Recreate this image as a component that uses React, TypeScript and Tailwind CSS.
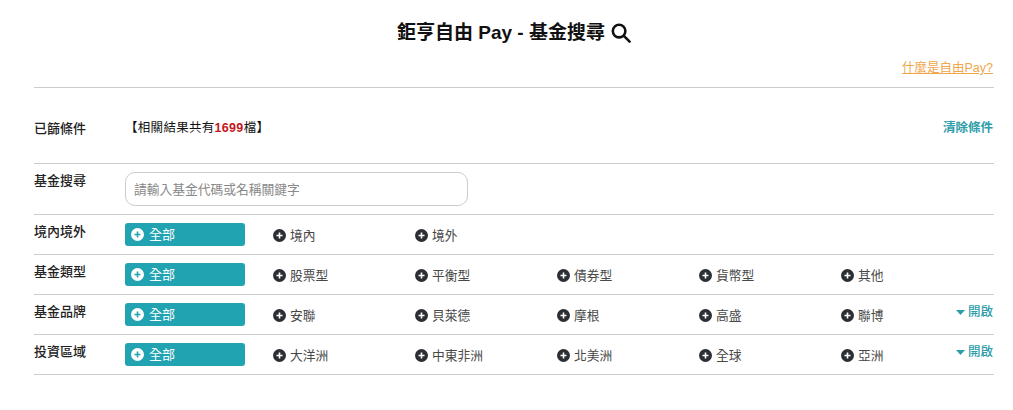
const font = { fontFamily: '"Liberation Sans", "Noto Sans CJK TC", sans-serif' }

const filterRows = [
  { label: '境內境外', options: ['境內', '境外'], more: false },
  { label: '基金類型', options: ['股票型', '平衡型', '債券型', '貨幣型', '其他'], more: false },
  { label: '基金品牌', options: ['安聯', '貝萊德', '摩根', '高盛', '聯博'], more: true },
  { label: '投資區域', options: ['大洋洲', '中東非洲', '北美洲', '全球', '亞洲'], more: true },
]

function PlusDot({ active }: { active?: boolean }) {
  const bg = active ? '#ffffff' : '#2b2e33'
  const fg = active ? '#21a3b1' : '#ffffff'
  return (
    <svg width="13" height="13" viewBox="0 0 13 13" className="shrink-0">
      <circle cx="6.5" cy="6.5" r="6.5" fill={bg} />
      <path d="M6.5 3.5v6M3.5 6.5h6" stroke={fg} strokeWidth="1.6" />
    </svg>
  )
}

export default function App() {
  return (
    <div className="h-[410px] w-[1013px] overflow-hidden bg-white" style={font}>
      <div className="ml-[34px] w-[960px]">
        {/* Title */}
        <div className="flex h-[59px] items-center justify-center gap-[6px] pt-[7px] text-[19px] font-bold text-[#111]">
          <span>鉅亨自由 Pay - 基金搜尋</span>
          <svg width="20" height="20" viewBox="0 0 21 21" fill="none" stroke="#111" strokeWidth="2.7">
            <circle cx="8.5" cy="8.5" r="6.6" />
            <path d="M13.5 13.5l6 6" strokeLinecap="round" />
          </svg>
        </div>

        <div className="flex h-[29px] items-start justify-end border-b border-[#ccc] pr-[1px]">
          <a className="text-[12.5px] leading-[18px] text-[#f0a64a] underline">什麼是自由Pay?</a>
        </div>

        {/* Result count */}
        <div className="flex h-[76px] items-center border-b border-[#ccc] pt-[6px]">
          <div className="w-[91px] shrink-0 text-[13px] font-medium text-[#222]">已篩條件</div>
          <div className="text-[12.5px] tracking-[0.3px] text-[#111]">
            【相關結果共有<span className="font-bold text-[#c4161c]">1699</span>檔】
          </div>
          <a className="ml-auto pr-[1px] text-[12.5px] font-bold text-[#2f9eaa]">清除條件</a>
        </div>

        {/* Search */}
        <div className="flex h-[51px] border-b border-[#ccc] pt-[8px]">
          <div className="w-[91px] shrink-0 text-[13px] font-medium leading-[18px] text-[#222]">基金搜尋</div>
          <input
            placeholder="請輸入基金代碼或名稱關鍵字"
            className="h-[34px] w-[343px] rounded-[10px] border border-[#ccc] px-[8px] text-[12.75px] placeholder:text-[#888]"
          />
        </div>

        {filterRows.map((row) => (
          <div key={row.label} className="flex h-[40px] border-b border-[#ccc] pt-[8px]">
            <div className="w-[91px] shrink-0 text-[13px] font-medium leading-[18px] text-[#222]">{row.label}</div>
            <button className="flex h-[23px] w-[120px] shrink-0 items-center gap-[5px] rounded-[3px] bg-[#21a3b1] pl-[6px] text-[13px] text-white">
              <PlusDot active />
              <span className="mt-[1px]">全部</span>
            </button>
            <div className="ml-[28px] flex min-w-0 flex-1">
              {row.options.map((option) => (
                <div key={option} className="flex h-[24px] w-[142px] shrink-0 items-center gap-[4px] text-[12.75px] text-[#484848]">
                  <PlusDot />
                  <span className="mt-[1px]">{option}</span>
                </div>
              ))}
            </div>
            {row.more && (
              <a className="flex h-[18px] shrink-0 items-center gap-[3px] whitespace-nowrap pr-[1px] text-[12.5px] font-medium text-[#2f9eaa]">
                <svg width="9" height="5" viewBox="0 0 9 5">
                  <path d="M0 0h9L4.5 5z" fill="#2f9eaa" />
                </svg>
                開啟
              </a>
            )}
          </div>
        ))}
      </div>
    </div>
  )
}
